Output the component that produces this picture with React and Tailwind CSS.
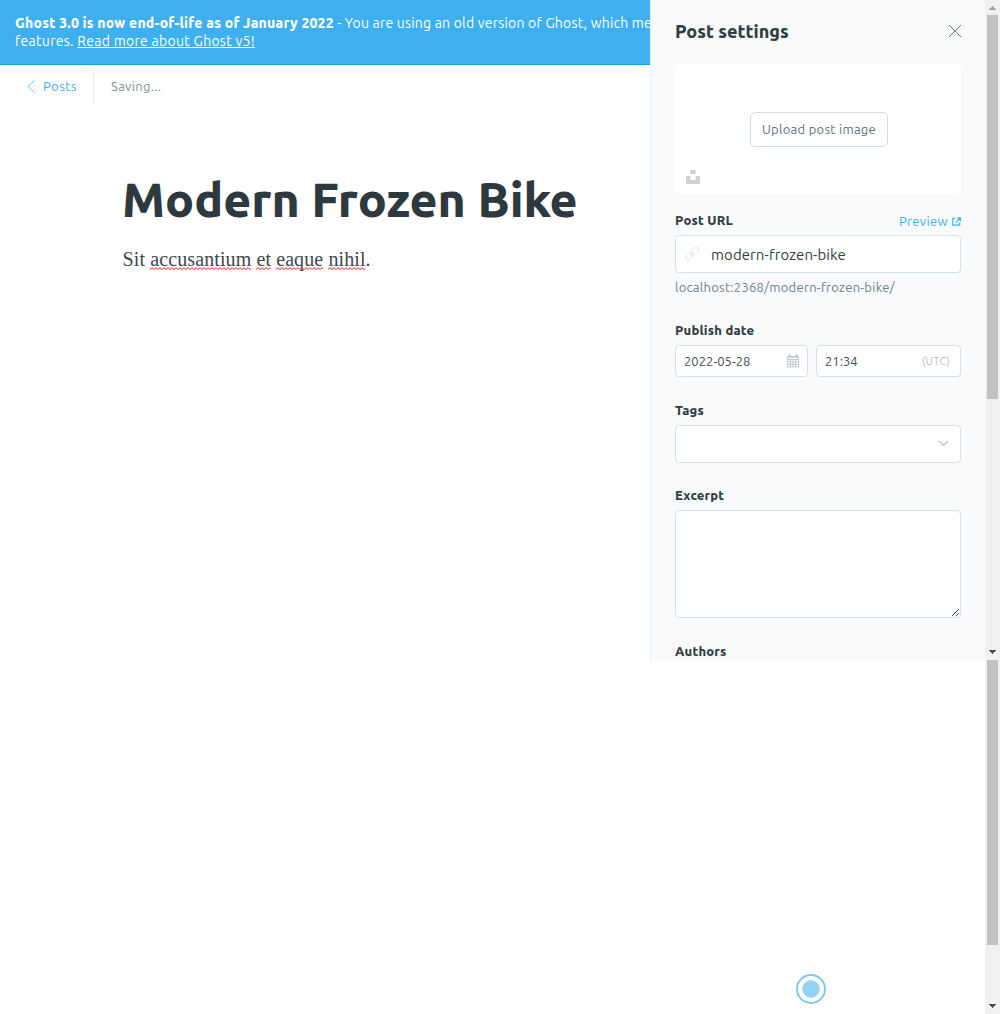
function Arrow({ up, className = '' }) {
  return (
    <svg width="7" height="4" viewBox="0 0 7 4" shapeRendering="crispEdges" className={className} fill="currentColor">
      <path d={up ? 'M3 0h1v1h1v1h1v1h1v1H0V3h1V2h1V1h1z' : 'M0 0h7v1H6v1H5v1H4v1H3V3H2V2H1V1H0z'} />
    </svg>
  );
}

function Banner() {
  return (
    <div className="h-[65px] shrink-0 overflow-hidden border-b border-[#179ce8] bg-[#3eb0ef] pt-[14px] pl-[15px] text-[14px] leading-[18px] tracking-[0.28px] whitespace-nowrap text-white">
      <p className="tracking-[0.2px]">
        <strong className="font-extrabold">Ghost 3.0 is now end-of-life as of January 2022</strong> - You are using an old version of Ghost, which means
      </p>
      <p>
        features. <a className="underline">Read more about Ghost v5!</a>
      </p>
    </div>
  );
}

function Editor() {
  return (
    <main className="flex w-[650px] shrink-0 flex-col overflow-hidden bg-white">
      <Banner />
      <header className="flex h-[43px] items-center pl-[27px] text-[13px] leading-[18px] tracking-[0.3px]">
        <svg width="8" height="13" viewBox="0 0 8 13" fill="none" stroke="#3eb0ef" strokeWidth="0.8" className="mr-2">
          <path d="M7.5.5 1 6.5l6.500 6" />
        </svg>
        <span className="mb-[2px] w-[50px] tracking-[0.45px] text-[#3eb0ef]">Posts</span>
        <div className="mr-[17px] h-[35px] w-px bg-[#e3edf4]" />
        <span className="mb-[2px] text-[#7f939e]">Saving...</span>
      </header>
      <h1 className="mt-[63px] pl-[122px] text-[48px] leading-[56px] font-extrabold whitespace-nowrap text-[#2e393f]">Modern Frozen Bike</h1>
      <p className="mt-[16px] pl-[122.600px] font-['Liberation_Serif',serif] text-[20px] leading-[32px] tracking-[0.1px] text-[#3c484e]">
        Sit <Misspelt>accusantium</Misspelt> <Misspelt>et</Misspelt> <Misspelt>eaque</Misspelt> <Misspelt>nihil</Misspelt>.
      </p>
    </main>
  );
}

function Misspelt({ children }) {
  return (
    <span className="relative">
      {children}
      <svg className="absolute bottom-[0px] left-0 h-[3px] w-full">
        <defs>
          <pattern id="squiggle" width="4" height="3" patternUnits="userSpaceOnUse">
            <path d="M-1 2.500 0 2.500 2 .7 4 2.500" fill="none" stroke="#f22" strokeWidth="1" />
          </pattern>
        </defs>
        <rect width="100%" height="3" fill="url(#squiggle)" />
      </svg>
    </span>
  );
}

function Label({ children }) {
  return <span className="text-[13px] leading-[18px] font-extrabold tracking-[0.2px] text-[#343f44]">{children}</span>;
}

function LinkIcon() {
  return (
    <svg width="14" height="14" viewBox="0 0 14 14" fill="none" stroke="#d3e1e9" strokeWidth="0.8">
      <g transform="rotate(-45 7 7)">
        <rect x="-1.200" y="4.500" width="8.600" height="5" rx="2.500" />
        <rect x="6.600" y="4.500" width="8.600" height="5" rx="2.500" />
        <path d="M4 7h6" />
      </g>
    </svg>
  );
}

function CalendarIcon() {
  return (
    <svg width="12" height="14" viewBox="0 0 12 14" fill="none" stroke="#aeb9bf">
      <path d="M.5 2.500h11v10.500H.5z" strokeWidth="0.7" />
      <path d="M1 3h10" strokeWidth="1.500" stroke="#c3ccd1" />
      <path d="M2.500.3v2.500M9.500.3v2.500" strokeWidth="1.300" />
      <path d="M3.500 5v8M6 5v8M8.500 5v8M.5 5.500h11M.5 8h11M.5 10.500h11" strokeWidth="0.7" />
    </svg>
  );
}

const field = 'flex items-center rounded-[4px] border border-[#d5e3ec] bg-white';

function SettingsPanel() {
  return (
    <aside className="flex h-[660px] w-[335px] shrink-0 flex-col overflow-hidden border-l border-[#e3eef6] bg-[#f9fafc] pr-6 pl-6">
      <div className="mt-[19px] flex h-6 shrink-0 items-center justify-between">
        <h2 className="text-[18px] leading-6 font-extrabold text-[#343f44]">Post settings</h2>
        <svg width="14" height="14" viewBox="0 0 14 14" stroke="#5d6a71" strokeWidth="0.9" className="mr-[-1px]">
          <path d="m1 1 12 12M13 1 1 13" />
        </svg>
      </div>
      <div className="relative mt-[21px] flex h-[130px] shrink-0 items-center justify-center rounded-[4px] bg-white pl-[2px]">
        <button className="h-[35px] w-[138px] rounded-[5px] border border-[#cfdde4] pt-px text-[13px] tracking-[0.28px] text-[#5d737d]">Upload post image</button>
        <svg width="14" height="14" viewBox="0 0 14 14" fill="#d2d2d2" className="absolute bottom-[10px] left-[11px]">
          <path d="M4.300 0h5.400v4H4.300zM0 6h4.300v4h5.400V6H14v8H0z" />
        </svg>
      </div>

      <div className="mt-[17px] flex h-[18px] shrink-0 items-center justify-between">
        <Label>Post URL</Label>
        <a className="mt-[2px] flex items-center gap-1 text-[13px] leading-[18px] tracking-[0.35px] text-[#3eb0ef]">
          Preview
          <svg width="9" height="9" viewBox="0 0 9 9" fill="none" stroke="#3eb0ef" strokeWidth="1.200">
            <path d="M3 1.300H.8v6.900h6.900V5.800M5 .8h3.400v3.400M8.200 1 5.800 3.400c-1 .8-1.800 1.300-1.800 2.600" />
          </svg>
        </a>
      </div>
      <div className={`${field} mt-[6px] h-[38px] shrink-0 pl-[9px]`}>
        <LinkIcon />
        <span className="mt-[2px] ml-[12px] text-[15px] tracking-[0.08px] text-[#343f44]">modern-frozen-bike</span>
      </div>
      <p className="mt-[5px] text-[13px] leading-[18px] tracking-[0.27px] text-[#6b828c]">localhost:2368/modern-frozen-bike/</p>

      <div className="mt-[25px] flex h-[18px] shrink-0"><Label>Publish date</Label></div>
      <div className="mt-[6px] flex h-8 shrink-0 gap-2 text-[13px] tracking-[0.02px] text-[#414d53]">
        <div className={`${field} w-[133px] justify-between px-2`}>
          <span className="mt-[2px]">2022-05-28</span>
          <CalendarIcon />
        </div>
        <div className={`${field} flex-1 justify-between pr-[10px] pl-2`}>
          <span className="mt-[2px]">21:34</span>
          <span className="text-[11px] font-light tracking-[0.25px] text-[#a9b7be]">(UTC)</span>
        </div>
      </div>

      <div className="mt-[24px] flex h-[18px] shrink-0"><Label>Tags</Label></div>
      <div className={`${field} mt-[6px] h-[38px] shrink-0 justify-end pr-[11px]`}>
        <svg width="11" height="7" viewBox="0 0 11 7" fill="none" stroke="#a6b9c4" strokeWidth="1.100" className="mb-px">
          <path d="m1 .8 4.500 4.700L10 .8" />
        </svg>
      </div>

      <div className="mt-[23px] flex h-[18px] shrink-0"><Label>Excerpt</Label></div>
      <div className={`${field} relative mt-[6px] h-[108px] shrink-0`}>
        <svg width="7" height="7" viewBox="0 0 7 7" shapeRendering="crispEdges" fill="#4b4b4b" className="absolute right-[1px] bottom-[1px]">
          <path d="M6 0h1v1H6zM5 1h1v1H5zM4 2h1v1H4zM3 3h1v1H3zM2 4h1v1H2zM1 5h1v1H1zM0 6h1v1H0zM6 4h1v1H6zM5 5h1v1H5zM4 6h1v1H4z" />
        </svg>
      </div>

      <div className="mt-[24px] flex h-[18px] shrink-0"><Label>Authors</Label></div>
    </aside>
  );
}

function Scrollbars() {
  return (
    <div className="flex w-[15px] shrink-0 flex-col bg-[#f1f1f1]">
      <div className="flex h-[660px] flex-col items-center">
        <Arrow up className="mt-[6px] text-[#a3a3a3]" />
        <div className="mt-[5px] h-[384px] w-[11px] bg-[#c1c1c1]" />
        <Arrow className="mt-auto mb-[6px] text-[#505050]" />
      </div>
      <div className="flex flex-1 flex-col items-center">
        <div className="h-[285px] w-[11px] bg-[#c1c1c1]" />
        <Arrow className="mt-auto mb-[6px] text-[#505050]" />
      </div>
    </div>
  );
}

export default function App() {
  return (
    <div className="flex h-[1014px] w-[1000px] overflow-hidden bg-white font-['Ubuntu','Noto_Sans',sans-serif]">
      <div className="flex w-[985px] shrink-0 flex-col justify-between">
        <div className="flex h-[660px]">
          <Editor />
          <SettingsPanel />
        </div>
        <div className="mr-[159px] mb-[10px] flex size-[30px] items-center justify-center self-end rounded-full border-2 border-[#7cc9f4]">
          <div className="size-[18px] rounded-full border border-[#a8daf7] bg-[#93d2f5]" />
        </div>
      </div>
      <Scrollbars />
    </div>
  );
}
